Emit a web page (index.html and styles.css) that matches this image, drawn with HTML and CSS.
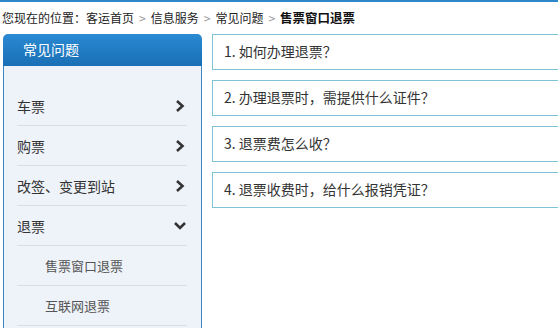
FILE: index.html
```html
<!DOCTYPE html>
<html lang="zh-CN">
  <head>
    <meta charset="utf-8" />
    <link rel="stylesheet" href="styles.css">
  </head>
  <body>
    <div id="topline"></div>
    <div id="crumbs">
      您现在的位置：<a href="#">客运首页</a><span class="sep">&gt;</span><a href="#">信息服务</a><span class="sep">&gt;</span><a href="#">常见问题</a><span class="sep">&gt;</span><b>售票窗口退票</b>
    </div>
    <div id="wrapper">
      <div id="sidebar">
        <div class="side-title">常见问题</div>
        <ul class="side-menu">
          <li><span>车票</span><svg class="chev" viewBox="0 0 10 14"><path d="M2 2 L7.5 7 L2 12" /></svg></li>
          <li><span>购票</span><svg class="chev" viewBox="0 0 10 14"><path d="M2 2 L7.5 7 L2 12" /></svg></li>
          <li><span>改签、变更到站</span><svg class="chev" viewBox="0 0 10 14"><path d="M2 2 L7.5 7 L2 12" /></svg></li>
          <li><span>退票</span><svg class="chev down" viewBox="0 0 14 10"><path d="M2 2 L7 7 L12 2" /></svg></li>
          <li class="sub"><span>售票窗口退票</span></li>
          <li class="sub"><span>互联网退票</span></li>
        </ul>
      </div>
      <div id="questions">
        <div class="q">1. 如何办理退票？</div>
        <div class="q">2. 办理退票时，需提供什么证件？</div>
        <div class="q">3. 退票费怎么收？</div>
        <div class="q">4. 退票收费时，给什么报销凭证？</div>
      </div>
    </div>
  </body>
</html>
```

FILE: styles.css
```css
body {
    margin: 0;
    font-family: "Noto Sans CJK SC", "Liberation Sans", sans-serif;
    color: #333;
    background: #fff;
    overflow: hidden;
}

#topline {
    height: 2px;
    background-color: #2f86c8;
}

#crumbs {
    height: 32px;
    line-height: 32px;
    padding-left: 2px;
    font-size: 12px;
    color: #222;
    white-space: nowrap;
}

  #crumbs a { color: #222; text-decoration: none; }
  #crumbs .sep { color: #999; margin: 0 5px; }
  #crumbs b { color: #111; font-size: 12.5px; }

#wrapper {
    display: flex;
    align-items: flex-start;
    gap: 10px;
    padding-left: 3px;
}

#sidebar {
    width: 199px;
    flex: none;
}

.side-title {
    height: 32px;
    line-height: 30px;
    padding-left: 20px;
    color: #fff;
    font-size: 14px;
    border-radius: 5px 5px 0 0;
    background: linear-gradient(#2a8ad2, #1a6fb5);
}

.side-menu {
    list-style: none;
    margin: 0;
    padding: 20px 14px 20px 13px;
    background-color: #eef2f9;
    border-left: 1px solid #3d86c3;
    border-right: 1px solid #3d86c3;
}

  .side-menu li {
      height: 39px;
      display: flex;
      align-items: center;
      justify-content: space-between;
      border-bottom: 1px solid #d9dde4;
      font-size: 14px;
      color: #333;
  }

  .side-menu li.sub {
      padding-left: 28px;
      font-size: 13px;
      color: #555;
  }

.chev {
    width: 10px;
    height: 14px;
    margin-right: 2px;
}

  .chev path {
      fill: none;
      stroke: #333;
      stroke-width: 2.6;
  }

  .chev.down {
      width: 14px;
      height: 10px;
      margin-right: 0;
  }

#questions {
    flex: 1;
    display: flex;
    flex-direction: column;
    gap: 10px;
}

  .q {
      height: 34px;
      line-height: 33px;
      padding-left: 11px;
      margin-right: -4px;
      border: 1px solid #7fc4d6;
      font-size: 14px;
      color: #333;
  }
```
